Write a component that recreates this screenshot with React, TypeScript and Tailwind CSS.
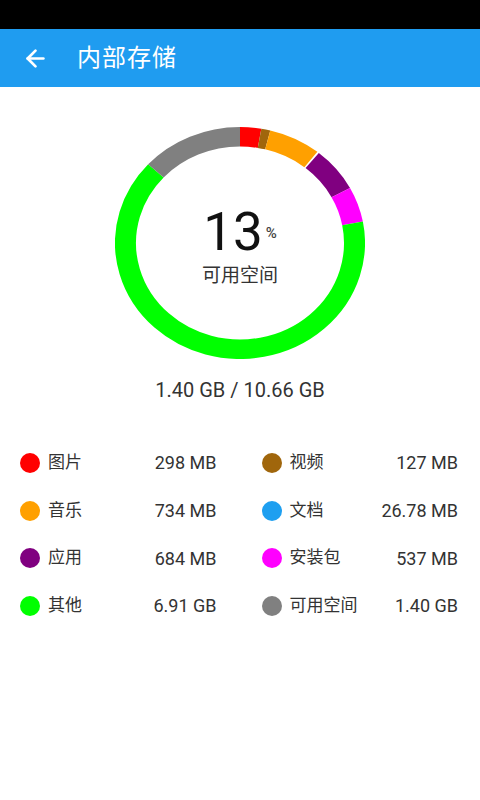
import { ArrowLeft } from 'lucide-react';

type Item = { name: string; size: string; mb: number; color: string };

const items: Item[] = [
  { name: '图片', size: '298 MB', mb: 298, color: '#ff0000' },
  { name: '视频', size: '127 MB', mb: 127, color: '#a0660c' },
  { name: '音乐', size: '734 MB', mb: 734, color: '#ffa000' },
  { name: '文档', size: '26.78 MB', mb: 26.78, color: '#1e9ff0' },
  { name: '应用', size: '684 MB', mb: 684, color: '#800080' },
  { name: '安装包', size: '537 MB', mb: 537, color: '#ff00ff' },
  { name: '其他', size: '6.91 GB', mb: 6.91 * 1024, color: '#00ff00' },
  { name: '可用空间', size: '1.40 GB', mb: 1.4 * 1024, color: '#808080' },
];

const font = { fontFamily: 'Roboto, "Noto Sans CJK SC", sans-serif' };

function point(a: number, r: number) {
  const rad = (a * Math.PI) / 180;
  return [125 + r * Math.sin(rad), 125 - r * Math.cos(rad)];
}

function Donut() {
  const total = items.reduce((s, i) => s + i.mb, 0);
  const r = 114.5;
  let start = 0;
  const arcs = items.map((item) => {
    const sweep = (item.mb / total) * 360;
    const a1 = start;
    const a2 = start + sweep;
    start = a2;
    // tiny slices are not drawn
    if (sweep < 1.5) return null;
    const [x1, y1] = point(a1, r);
    const [x2, y2] = point(a2, r);
    const large = sweep > 180 ? 1 : 0;
    return (
      <path
        key={item.name}
        d={`M ${x1} ${y1} A ${r} ${r} 0 ${large} 1 ${x2} ${y2}`}
        stroke={item.color}
        strokeWidth={21}
        fill="none"
      />
    );
  });

  return (
    <div className="relative mt-[40px] w-[250px] h-[232px]">
      <svg viewBox="0 0 250 250" preserveAspectRatio="none" className="w-[250px] h-[232px]">
        {arcs}
      </svg>
      <div className="absolute left-0 right-0 top-[79px] flex flex-col items-center">
        <div className="flex items-start text-[#111]">
          <span className="text-[53px] leading-[52px]">13</span>
          <span className="text-[15px] leading-none mt-[20px] ml-[3px] text-[#444] font-medium">%</span>
        </div>
        <div className="mt-[5px] text-[19px] leading-[26px] text-[#333]">可用空间</div>
      </div>
    </div>
  );
}

export default function App() {
  return (
    <div className="w-[480px] h-[800px] bg-white flex flex-col" style={font}>
      {/* status bar */}
      <div className="h-[29px] bg-black" />

      {/* app bar */}
      <div className="h-[58px] bg-[#1f9cf0] flex items-center pl-[22px] gap-[28px]">
        <ArrowLeft size={27} strokeWidth={2.4} className="text-white" />
        <span className="text-[24px] text-white tracking-[1px]">内部存储</span>
      </div>

      <div className="flex flex-col items-center">
        <Donut />
        <div className="mt-[18px] text-[20px] leading-[26px] text-[#333]">
          1.40 GB / 10.66 GB
        </div>
      </div>

      {/* legend */}
      <div className="mt-[36px] pl-[20px] pr-[22px] grid grid-cols-2 gap-x-[45px]">
        {items.map((item) => (
          <div key={item.name} className="h-[47.7px] flex items-center">
            <span
              className="w-[20px] h-[20px] rounded-full shrink-0"
              style={{ backgroundColor: item.color }}
            />
            <span className="ml-[8px] text-[17px] text-[#333]">{item.name}</span>
            <span className="ml-auto text-[18px] text-[#333]">{item.size}</span>
          </div>
        ))}
      </div>
    </div>
  );
}
